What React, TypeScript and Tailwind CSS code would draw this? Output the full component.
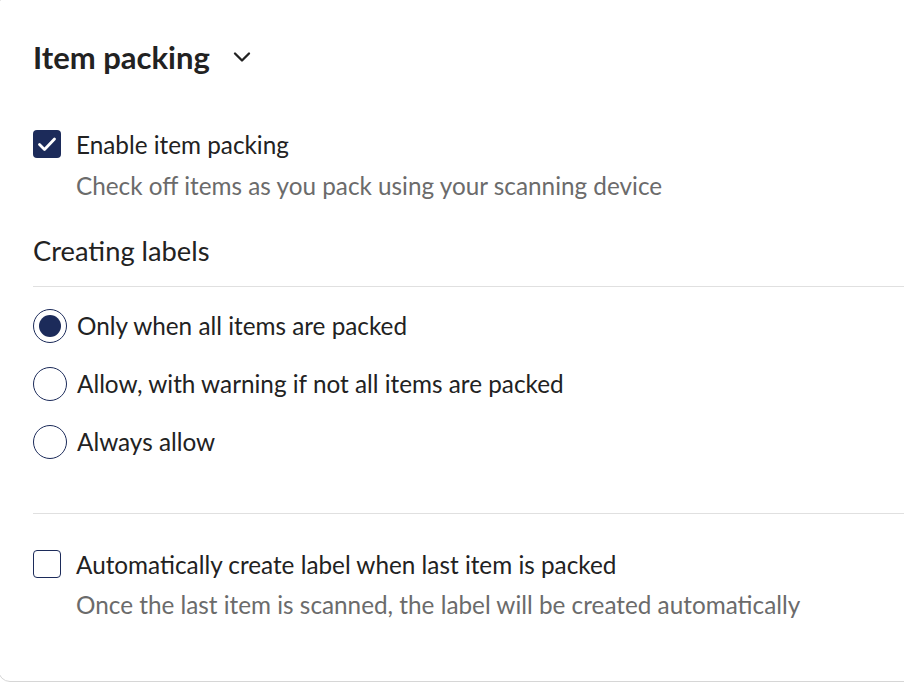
import React from "react";
import { ChevronDown } from "lucide-react";

const CheckBox = ({ checked }: { checked: boolean }) => (
  <div
    className={
      checked
        ? "w-[28px] h-[28px] rounded-[4px] bg-[#1c2b5a] flex items-center justify-center shrink-0"
        : "w-[28px] h-[28px] rounded-[4px] border-[1.5px] border-[#1c2b5a] bg-white shrink-0"
    }
  >
    {checked && (
      <svg width="24" height="24" viewBox="0 0 24 24" fill="none">
        <path
          d="M4.5 12.5l5 5 10-10.5"
          stroke="#fff"
          strokeWidth="2.8"
          strokeLinecap="round"
          strokeLinejoin="round"
        />
      </svg>
    )}
  </div>
);

const Radio = ({ selected }: { selected: boolean }) => (
  <div className="w-[34px] h-[34px] rounded-full border-[1.5px] border-[#1c2b5a] bg-white flex items-center justify-center shrink-0">
    {selected && <div className="w-[22px] h-[22px] rounded-full bg-[#1c2b5a]" />}
  </div>
);

const options = [
  { label: "Only when all items are packed", selected: true },
  { label: "Allow, with warning if not all items are packed", selected: false },
  { label: "Always allow", selected: false },
];

export default function App() {
  return (
    <div
      className="w-[904px] h-[682px] overflow-hidden bg-white text-[#222222]"
      style={{ fontFamily: "Lato, 'Noto Sans', sans-serif" }}
    >
      <div className="-mt-[6px] -ml-[2px] w-[960px] h-[688px] border border-[#d6d6d6] rounded-[12px] bg-white pl-[34px] pt-[44px]">
        <div className="flex items-center h-[36px]">
          <h2 className="text-[31px] leading-[36px] font-bold">Item packing</h2>
          <ChevronDown size={28} strokeWidth={2} color="#222" className="ml-[18px]" />
        </div>

        <div className="mt-[55px] flex items-start gap-[15px]">
          <CheckBox checked />
          <div>
            <div className="text-[24.3px] leading-[30px]">Enable item packing</div>
            <div className="mt-[11px] text-[24.3px] leading-[30px] text-[#6b6b6b]">
              Check off items as you pack using your scanning device
            </div>
          </div>
        </div>

        <div className="mt-[34px] text-[27.3px] leading-[32px]">Creating labels</div>
        <div className="mt-[19px] h-px bg-[#e0e0e0]" />

        <div className="mt-[22px] flex flex-col gap-[24px]">
          {options.map((o) => (
            <label key={o.label} className="flex items-center gap-[10px] h-[34px]">
              <Radio selected={o.selected} />
              <span className="text-[24.3px] leading-[30px]">{o.label}</span>
            </label>
          ))}
        </div>

        <div className="mt-[54px] h-px bg-[#e0e0e0]" />

        <div className="mt-[36px] flex items-start gap-[15px]">
          <CheckBox checked={false} />
          <div>
            <div className="text-[24.3px] leading-[30px]">
              Automatically create label when last item is packed
            </div>
            <div className="mt-[10px] text-[24.3px] leading-[30px] text-[#6b6b6b]">
              Once the last item is scanned, the label will be created automatically
            </div>
          </div>
        </div>
      </div>
    </div>
  );
}
